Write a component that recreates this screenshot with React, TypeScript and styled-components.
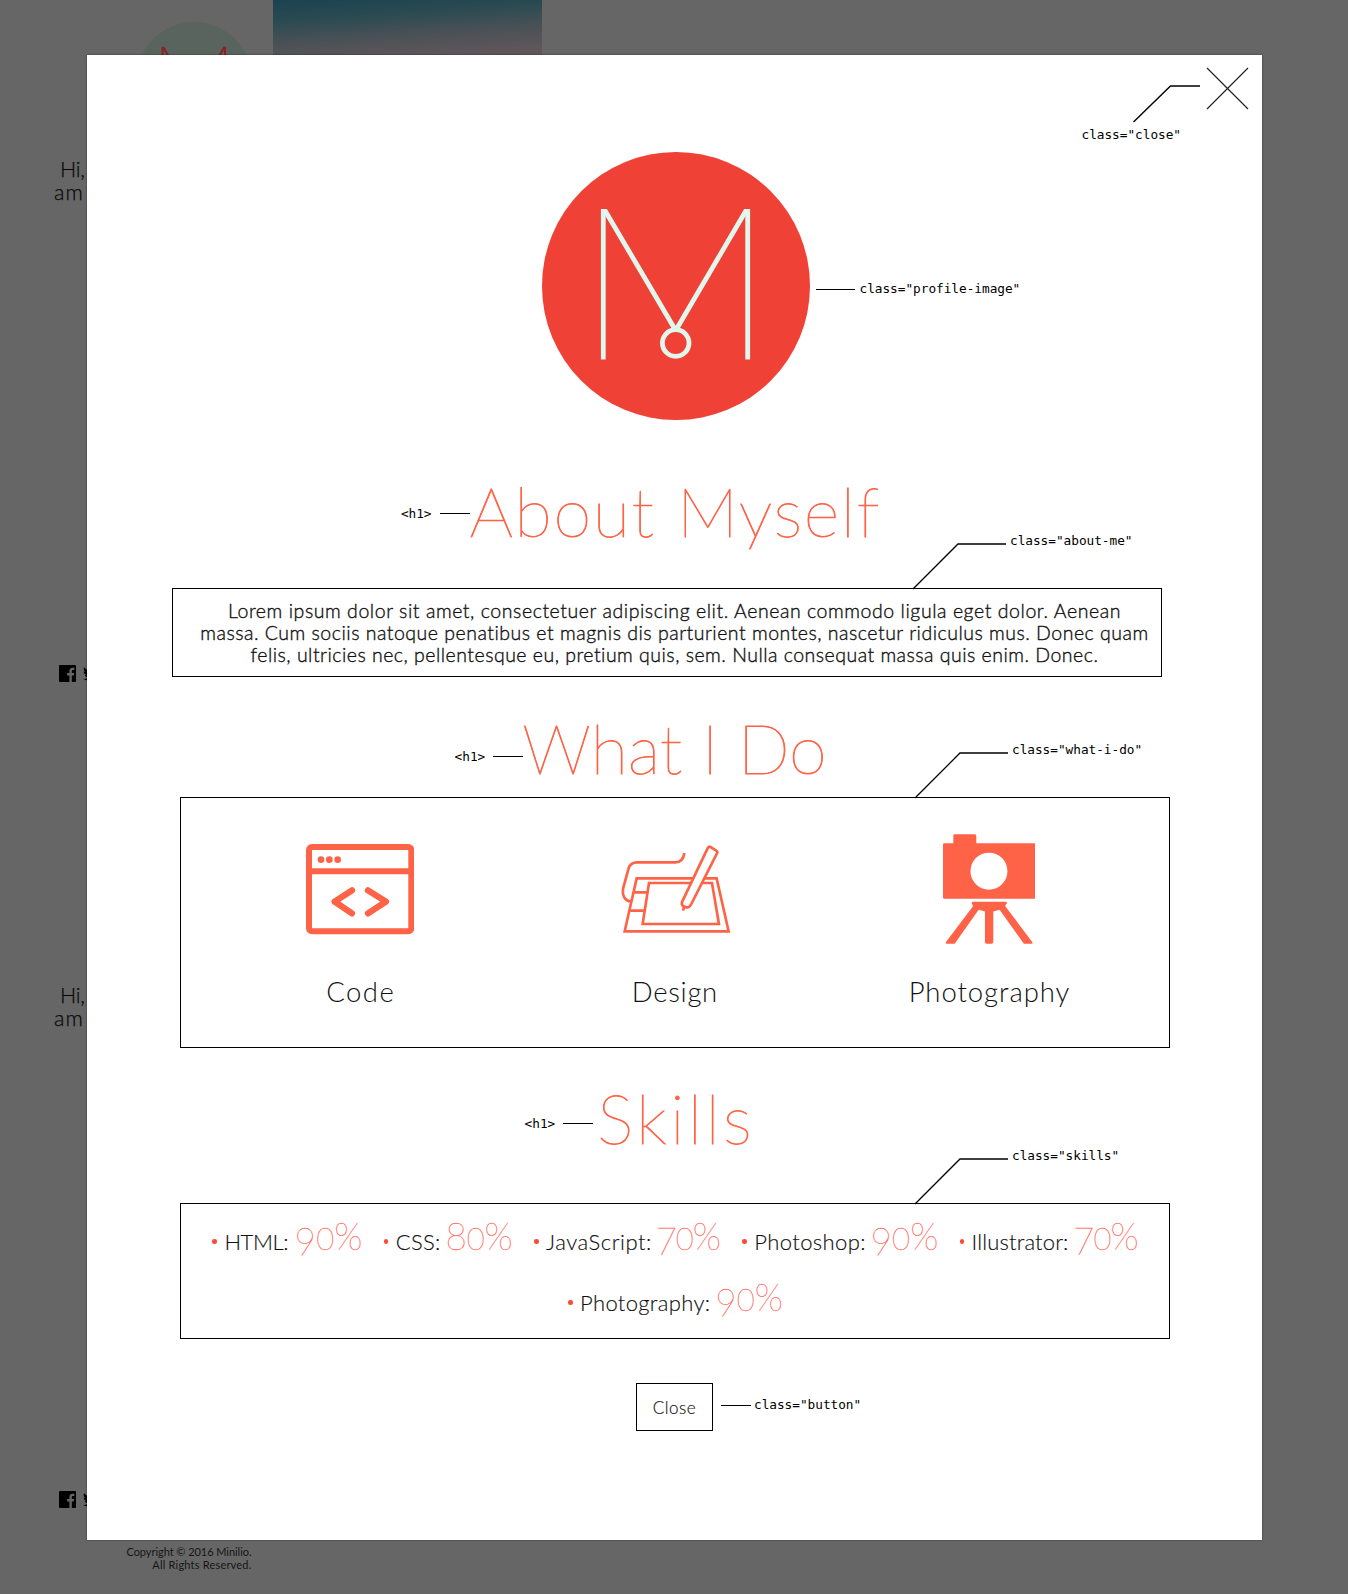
import React from "react";
import styled, { createGlobalStyle } from "styled-components";
import { FaTwitter } from "react-icons/fa";

const TOMATO = "#ff6347";
const INK = "#111";

const GlobalStyle = createGlobalStyle`
  * { box-sizing: border-box; }
  body {
    margin: 0;
    background: #666;
    color: ${INK};
    font-family: Lato, "Liberation Sans", sans-serif;
    font-variant-ligatures: none;
  }
`;

const Stage = styled.div`
  display: grid;
  grid-template-columns: 1348px;
  grid-template-rows: 1594px;
  overflow: hidden;
  & > * { grid-area: 1 / 1; }
`;

/* ---------- dimmed page behind the dialog ---------- */

const Backdrop = styled.div`
  display: flex;
  align-items: flex-start;
  background: #666;
`;

const Sidebar = styled.aside`
  width: 273px;
`;

const Hero = styled.div`
  width: 269px;
  height: 120px;
  background: linear-gradient(176deg, #1b4350 0%, #2b4a52 16%, #4a5156 32%, #5f565a 48%);
`;

const Card = styled.section`
  height: 826px;
  padding-top: 22px;
`;

const LastCard = styled(Card)`
  height: 682px;
`;

const CardLogo = styled.div`
  display: flex;
  margin-left: 136px;
`;

const Bio = styled.div`
  margin-top: 19.5px;
  height: 46.5px;
  font-size: 21.5px;
  font-weight: 300;
  line-height: 23.5px;
  -webkit-text-stroke: 0.25px #000;
`;

const BioLine = styled.div<{ $indent: number; $spacing: number }>`
  padding-left: ${(p) => p.$indent}px;
  letter-spacing: ${(p) => p.$spacing}px;
`;

const Social = styled.div`
  display: flex;
  gap: 7px;
  margin-top: 461px;
  padding-left: 59px;
  color: #000;
`;

const Copyright = styled.footer`
  width: 251.5px;
  margin-top: 37px;
  text-align: right;
  font-size: 11px;
  line-height: 13.3px;
  color: #161616;
`;

const CopyrightLine = styled.div<{ $spacing: number }>`
  letter-spacing: ${(p) => p.$spacing}px;
`;

/* ---------- dialog ---------- */

const Dialog = styled.main`
  position: relative;
  display: flex;
  flex-direction: column;
  align-items: center;
  width: 1175px;
  height: 1485px;
  margin: 55px 0 0 87px;
  padding-top: 97px;
  background: #fff;
  box-shadow: 0 0 2px rgba(0, 0, 0, 0.45);
`;

const CloseArea = styled.div`
  position: absolute;
  top: 12px;
  right: 11px;
  width: 170px;
  height: 80px;
`;

const CloseLabel = styled.div`
  position: absolute;
  left: 0.5px;
  top: 56px;
`;

const Code = styled.code`
  font-family: "DejaVu Sans Mono", "Liberation Mono", monospace;
  font-size: 12.75px;
  line-height: 16px;
  letter-spacing: -0.02px;
  white-space: nowrap;
  color: #000;
`;

const Rule = styled.span<{ $width: number }>`
  width: ${(p) => p.$width}px;
  height: 1px;
  background: #000;
`;

const Profile = styled.div`
  position: relative;
  display: flex;
  margin-left: 2px;
`;

const SideNote = styled.div<{ $offset: number; $top: number; $inner: number }>`
  position: absolute;
  left: calc(100% + ${(p) => p.$offset}px);
  top: ${(p) => p.$top}px;
  display: flex;
  align-items: center;
  gap: ${(p) => p.$inner}px;
`;

const HeadingWrap = styled.div<{ $top: number }>`
  position: relative;
  margin-top: ${(p) => p.$top}px;
`;

const Heading = styled.h1<{ $spacing: number }>`
  margin: 0 ${(p) => -p.$spacing}px 0 0;
  font-size: 68.5px;
  font-weight: 100;
  line-height: 80px;
  letter-spacing: ${(p) => p.$spacing}px;
  white-space: nowrap;
  color: ${TOMATO};
  -webkit-text-stroke: 0.8px ${TOMATO};
`;

const HeadingNote = styled.div<{ $top: number; $gap: number }>`
  position: absolute;
  right: calc(100% + ${(p) => p.$gap}px);
  top: ${(p) => p.$top - 8}px;
  display: flex;
  align-items: center;
  gap: 8px;
`;

const Outlined = styled.section`
  position: relative;
  border: 1px solid #000;
`;

const AboutBox = styled(Outlined)`
  width: 990px;
  height: 89px;
  margin: 37.5px 15px 0 0;
  padding: 10.5px 0 0 15px;
  text-align: center;
  font-size: 19.5px;
  font-weight: 300;
  line-height: 22.1px;
  -webkit-text-stroke: 0.35px ${INK};
`;

const TextLine = styled.div<{ $spacing: number }>`
  letter-spacing: ${(p) => p.$spacing}px;
  white-space: nowrap;
`;

const WhatBox = styled(Outlined)`
  display: grid;
  grid-template-columns: repeat(3, 314.5px);
  justify-content: center;
  width: 990px;
  height: 251px;
  margin: 9px 0 0 0;
  padding-top: 36px;
`;

const Service = styled.div`
  display: flex;
  flex-direction: column;
  align-items: center;
`;

const ServiceIcon = styled.div`
  display: flex;
  align-items: center;
  height: 110px;
`;

const ServiceName = styled.div<{ $spacing: number }>`
  margin: 31.5px ${(p) => -p.$spacing}px 0 0;
  font-size: 27.5px;
  font-weight: 300;
  line-height: 32px;
  letter-spacing: ${(p) => p.$spacing}px;
`;

const SkillsBox = styled(Outlined)`
  display: flex;
  flex-direction: column;
  gap: 15.4px;
  width: 990px;
  height: 136px;
  margin: 45px 0 0 0;
  padding-top: 8.5px;
`;

const SkillRow = styled.div`
  display: flex;
  justify-content: center;
  gap: 23.3px;
  height: 46px;
`;

const Skill = styled.div<{ $width: number }>`
  display: flex;
  align-items: baseline;
  justify-content: space-between;
  width: ${(p) => p.$width}px;
  line-height: 46px;
  white-space: nowrap;
`;

const SkillName = styled.span<{ $spacing: number }>`
  font-size: 22px;
  font-weight: 300;
  letter-spacing: ${(p) => p.$spacing}px;
  -webkit-text-stroke: 0.15px ${INK};
  &::before {
    content: "";
    display: inline-block;
    width: 4.5px;
    height: 4.5px;
    margin-right: 7.5px;
    vertical-align: 6px;
    border-radius: 50%;
    background: #fb4b35;
  }
`;

const Percent = styled.span<{ $spacing: number }>`
  font-size: 37px;
  font-weight: 100;
  letter-spacing: ${(p) => p.$spacing}px;
  margin-right: ${(p) => -p.$spacing - 2}px;
  color: #ff6a5c;
  -webkit-text-stroke: 0.3px #ff6a5c;
`;

const Digit = styled.span<{ $small?: boolean; $drop?: boolean }>`
  display: inline-block;
  font-size: ${(p) => (p.$small ? 31 : 37)}px;
  transform: translateY(${(p) => (p.$drop ? 5 : 0)}px);
`;

const ButtonWrap = styled.div`
  position: relative;
  margin-top: 44px;
`;

const Button = styled.button`
  display: block;
  width: 77px;
  height: 48px;
  padding: 2px 0 0;
  border: 1px solid #000;
  background: #fff;
  color: #222;
  font: 300 17px/20px Lato, sans-serif;
  letter-spacing: 0.5px;
  -webkit-text-stroke: 0.2px #222;
`;

const Callout = styled.div<{ $left: number }>`
  position: absolute;
  left: ${(p) => p.$left}px;
  bottom: 100%;
  display: flex;
  align-items: flex-start;
  gap: 4px;
  text-align: left;
  font-weight: 400;
  -webkit-text-stroke: 0;
`;

const CalloutLine = styled.svg`
  display: block;
  overflow: visible;
`;

const CalloutText = styled(Code)`
  margin-top: -10px;
`;

/* ---------- drawings ---------- */

function Monogram({ id, size, disc, stroke }: { id: string; size: number; disc: string; stroke: string }) {
  return (
    <svg width={size} height={size} viewBox="0 0 268 268" fill="none">
      <circle cx="134" cy="134" r="134" fill={disc} />
      <clipPath id={id}>
        <rect x="58" y="57" width="151" height="150.500" />
      </clipPath>
      <g stroke={stroke} strokeWidth="4.800">
        <g clipPath={`url(#${id})`}>
          <path d="M61.300 208V56.500M205.700 208V56.500" />
          <path d="M61.500 56L133.700 178.500L205.500 56" />
        </g>
        <circle cx="133.700" cy="191" r="13.300" fill={disc} />
      </g>
    </svg>
  );
}

const FacebookIcon = () => (
  <svg width="17" height="17" viewBox="0 0 17 17">
    <rect width="17" height="17" rx="1" fill="#000" />
    <path d="M10.400 17V10.400H8.100V7.900h2.300V6.100c0-2.200 1.300-3.400 3.300-3.400h1.600v2.400h-1.300c-.9 0-1.200.4-1.200 1.200v1.600h2.400l-.4 2.500h-2V17z" fill="#666" />
  </svg>
);

const CodeIcon = () => (
  <svg width="108.300" height="91.300" viewBox="78 68 325 274" fill="none" stroke={TOMATO}>
    <rect x="87" y="80" width="307" height="253" rx="9" strokeWidth="18" />
    <path d="M87 153H394" strokeWidth="18" />
    <g fill={TOMATO} stroke="none">
      <circle cx="123" cy="118" r="10" />
      <circle cx="148" cy="118" r="10" />
      <circle cx="173" cy="118" r="10" />
    </g>
    <path d="M216 210L164 244L216 279M264 210L318 244L264 279" strokeWidth="19" strokeLinecap="round" strokeLinejoin="round" />
  </svg>
);

const DesignIcon = () => (
  <svg width="109.300" height="88" viewBox="1020 74 328 264" fill="none" stroke={TOMATO} strokeWidth="8" overflow="visible">
    <path d="M1213 98C1211 116 1202 126 1186 126H1072C1056 126 1048 134 1045 147L1030 202C1025 224 1034 243 1054 243" />
    <path d="M1070 174H1310L1346 333H1034Z" />
    <path d="M1107 188H1296L1317 311H1088Z" />
    <path d="M1061 216H1103M1049 271H1094" />
    <path d="M1284 82Q1287 77 1292 80L1309 91Q1314 94 1311 99L1234 251Q1228 263 1218 261L1209 257Q1203 252 1207 243Z" fill="#fff" strokeLinejoin="round" />
    <path d="M1213 258L1209 271" />
  </svg>
);

const CameraIcon = () => (
  <svg width="92.600" height="110" viewBox="189 71.500 278 330" fill={TOMATO}>
    <path fillRule="evenodd" d="M193 99H220V76Q220 72 224 72H284Q289 72 289 77V99H463Q467 99 467 103V262Q467 266 463 266H193Q189 266 189 262V103Q189 99 193 99ZM327 127.500A55.500 55.500 0 1 0 327 238.500A55.500 55.500 0 1 0 327 127.500Z" />
    <path d="M277 275H379Q383 279 378 282L376 288L458 397Q459 401 454 401H432L359 299L340 304V396Q340 401 334 401H320Q315 401 315 396V304L296 299L224 401H200Q196 400 198 396L279 288L277 282Q273 279 277 275Z" />
  </svg>
);

const CloseDrawing = () => (
  <svg width="170" height="80" fill="none">
    <path d="M52.500 55L89.500 19H119" stroke="#000" strokeWidth="1.400" />
    <path d="M126 1L167 42M167 1L126 42" stroke="#222" strokeWidth="1.200" />
  </svg>
);

function BoxCallout({ left, label }: { left: number; label: string }) {
  return (
    <Callout $left={left}>
      <CalloutLine width="92" height="46" fill="none" stroke="#000" strokeWidth="1.300">
        <path d="M-1 46L44 1H92" />
      </CalloutLine>
      <CalloutText>{label}</CalloutText>
    </Callout>
  );
}

/* ---------- content ---------- */

const sections = {
  about: { title: "About Myself", spacing: 1.65, top: 50.5, noteTop: 43, gap: 0 },
  what: { title: "What I Do", spacing: -0.1, top: 31, noteTop: 48.5, gap: -1 },
  skills: { title: "Skills", spacing: 3.4, top: 30, noteTop: 45.5, gap: 4 },
};

const services = [
  { name: "Code", spacing: 1.5, icon: <CodeIcon /> },
  { name: "Design", spacing: 0.7, icon: <DesignIcon /> },
  { name: "Photography", spacing: 0.95, icon: <CameraIcon /> },
];

const skillRows = [
  [
    { name: "HTML:", value: "90%", width: 148, spacing: -0.4 },
    { name: "CSS:", value: "80%", width: 127, spacing: 0.3 },
    { name: "JavaScript:", value: "70%", width: 185, spacing: 0.55 },
    { name: "Photoshop:", value: "90%", width: 194, spacing: 0.4 },
    { name: "Illustrator:", value: "70%", width: 177, spacing: 0.15 },
  ],
  [{ name: "Photography:", value: "90%", width: 213, spacing: 0.35 }],
];

const digitSpacing: Record<string, number> = { "90%": 0.1, "80%": -0.2, "70%": -1 };

function SectionHeading({ title, spacing, top, noteTop, gap }: (typeof sections)["about"]) {
  return (
    <HeadingWrap $top={top}>
      <HeadingNote $top={noteTop} $gap={gap}>
        <Code>&lt;h1&gt;</Code>
        <Rule $width={30} />
      </HeadingNote>
      <Heading $spacing={spacing}>{title}</Heading>
    </HeadingWrap>
  );
}

const CardBody = ({ id }: { id: string }) => (
  <>
    <CardLogo>
      <Monogram id={id} size={116} disc="#59645f" stroke="#8e2020" />
    </CardLogo>
    <Bio>
      <BioLine $indent={60} $spacing={-0.3}>Hi,</BioLine>
      <BioLine $indent={54} $spacing={1}>am</BioLine>
    </Bio>
    <Social>
      <FacebookIcon />
      <FaTwitter size={17} />
    </Social>
  </>
);

export default function App() {
  return (
    <>
      <GlobalStyle />
      <Stage>
        <Backdrop>
          <Sidebar>
            <Card>
              <CardBody id="logo-first" />
            </Card>
            <LastCard>
              <CardBody id="logo-second" />
            </LastCard>
            <Copyright>
              <CopyrightLine $spacing={-0.05}>Copyright © 2016 Minilio.</CopyrightLine>
              <CopyrightLine $spacing={0.2}>All Rights Reserved.</CopyrightLine>
            </Copyright>
          </Sidebar>
          <Hero />
        </Backdrop>

        <Dialog>
          <CloseArea>
            <CloseDrawing />
            <CloseLabel>
              <Code>class="close"</Code>
            </CloseLabel>
          </CloseArea>

          <Profile>
            <Monogram id="logo-profile" size={268} disc="#ef4136" stroke="#e1f7ee" />
            <SideNote $offset={6} $top={129} $inner={5}>
              <Rule $width={39} />
              <Code>class="profile-image"</Code>
            </SideNote>
          </Profile>

          <SectionHeading {...sections.about} />
          <AboutBox>
            <BoxCallout left={741} label='class="about-me"' />
            <TextLine $spacing={0.56}>
              Lorem ipsum dolor sit amet, consectetuer adipiscing elit. Aenean commodo ligula eget dolor. Aenean
            </TextLine>
            <TextLine $spacing={0.505}>
              massa. Cum sociis natoque penatibus et magnis dis parturient montes, nascetur ridiculus mus. Donec quam
            </TextLine>
            <TextLine $spacing={0.49}>
              felis, ultricies nec, pellentesque eu, pretium quis, sem. Nulla consequat massa quis enim. Donec.
            </TextLine>
          </AboutBox>

          <SectionHeading {...sections.what} />
          <WhatBox>
            <BoxCallout left={735.5} label='class="what-i-do"' />
            {services.map((s) => (
              <Service key={s.name}>
                <ServiceIcon>{s.icon}</ServiceIcon>
                <ServiceName $spacing={s.spacing}>{s.name}</ServiceName>
              </Service>
            ))}
          </WhatBox>

          <SectionHeading {...sections.skills} />
          <SkillsBox>
            <BoxCallout left={735.5} label='class="skills"' />
            {skillRows.map((row, i) => (
              <SkillRow key={i}>
                {row.map((s) => (
                  <Skill key={s.name} $width={s.width}>
                    <SkillName $spacing={s.spacing}>{s.name}</SkillName>
                    <Percent $spacing={digitSpacing[s.value]}>
                      <Digit $drop={s.value[0] !== "8"}>{s.value[0]}</Digit>
                      <Digit $small>{s.value[1]}</Digit>%
                    </Percent>
                  </Skill>
                ))}
              </SkillRow>
            ))}
          </SkillsBox>

          <ButtonWrap>
            <Button>Close</Button>
            <SideNote $offset={8} $top={14} $inner={3}>
              <Rule $width={30} />
              <Code>class="button"</Code>
            </SideNote>
          </ButtonWrap>
        </Dialog>
      </Stage>
    </>
  );
}
